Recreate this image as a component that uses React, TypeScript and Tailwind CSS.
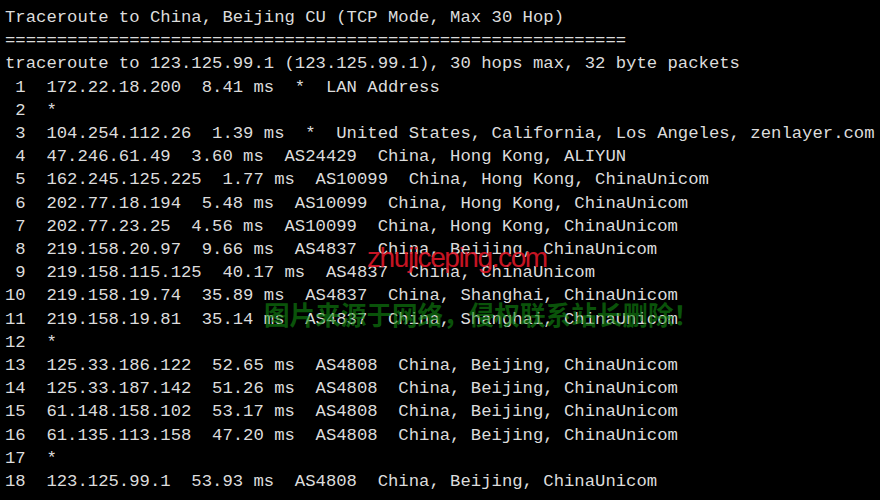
import React from "react";

const lines = [
  "Traceroute to China, Beijing CU (TCP Mode, Max 30 Hop)",
  "============================================================",
  "traceroute to 123.125.99.1 (123.125.99.1), 30 hops max, 32 byte packets",
  " 1  172.22.18.200  8.41 ms  *  LAN Address",
  " 2  *",
  " 3  104.254.112.26  1.39 ms  *  United States, California, Los Angeles, zenlayer.com",
  " 4  47.246.61.49  3.60 ms  AS24429  China, Hong Kong, ALIYUN",
  " 5  162.245.125.225  1.77 ms  AS10099  China, Hong Kong, ChinaUnicom",
  " 6  202.77.18.194  5.48 ms  AS10099  China, Hong Kong, ChinaUnicom",
  " 7  202.77.23.25  4.56 ms  AS10099  China, Hong Kong, ChinaUnicom",
  " 8  219.158.20.97  9.66 ms  AS4837  China, Beijing, ChinaUnicom",
  " 9  219.158.115.125  40.17 ms  AS4837  China, ChinaUnicom",
  "10  219.158.19.74  35.89 ms  AS4837  China, Shanghai, ChinaUnicom",
  "11  219.158.19.81  35.14 ms  AS4837  China, Shanghai, ChinaUnicom",
  "12  *",
  "13  125.33.186.122  52.65 ms  AS4808  China, Beijing, ChinaUnicom",
  "14  125.33.187.142  51.26 ms  AS4808  China, Beijing, ChinaUnicom",
  "15  61.148.158.102  53.17 ms  AS4808  China, Beijing, ChinaUnicom",
  "16  61.135.113.158  47.20 ms  AS4808  China, Beijing, ChinaUnicom",
  "17  *",
  "18  123.125.99.1  53.93 ms  AS4808  China, Beijing, ChinaUnicom",
];

export default function App() {
  return (
    <div className="relative w-[880px] h-[500px] bg-black overflow-hidden">
      <div className="pt-[6px] pl-[5px] font-['Liberation_Mono',monospace] text-[17.25px] leading-[23.2px] text-[#dcdcdc] whitespace-pre">
        {lines.map((l, i) => (
          <div key={i}>{l}</div>
        ))}
      </div>
      <div className="absolute left-[367px] top-[241px] font-['Liberation_Sans',sans-serif] text-[28px] leading-[34px] tracking-[-1.4px] text-[#e8182a] opacity-85 whitespace-nowrap">
        zhujiceping.com
      </div>
      <div className="absolute left-[264px] top-[300px] font-['Noto_Sans_CJK_SC',sans-serif] text-[25.6px] leading-[28px] font-bold text-[#128a12] opacity-60 whitespace-nowrap">
        图片来源于网络，侵权联系站长删除！
      </div>
    </div>
  );
}
